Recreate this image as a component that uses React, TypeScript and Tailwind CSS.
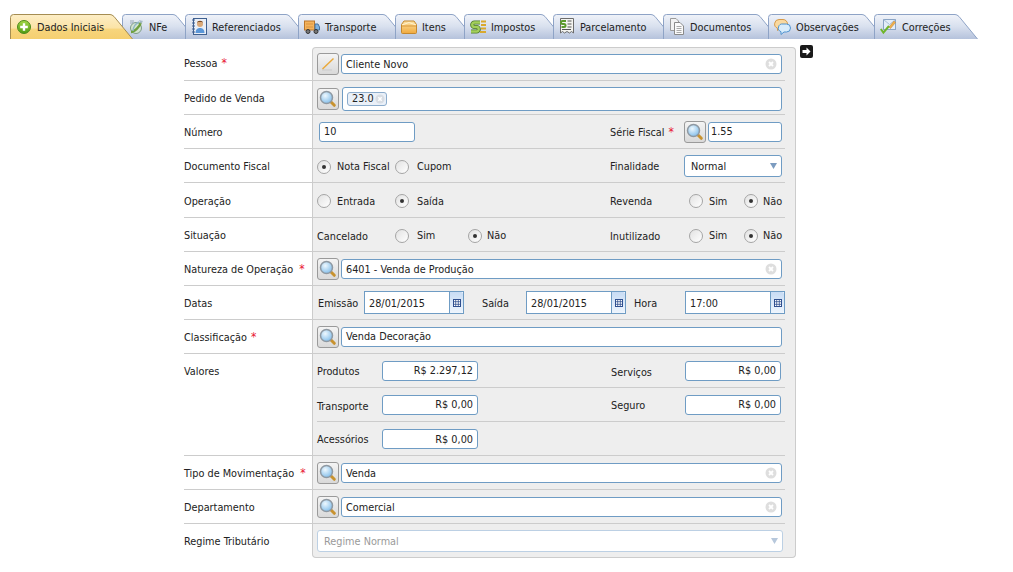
import React from "react";

const Plus = () => (
  <svg width="14" height="14" viewBox="0 0 14 14" className="shrink-0">
    <defs><linearGradient id="pg" x1="0" y1="0" x2="0" y2="1"><stop offset="0" stopColor="#a6d94a" /><stop offset="1" stopColor="#4f9a12" /></linearGradient></defs>
    <circle cx="7" cy="7" r="6.5" fill="url(#pg)" stroke="#4c8a1c" />
    <path d="M7 3.2v7.6M3.2 7h7.6" stroke="#fff" strokeWidth="2.4" />
  </svg>
);
const NfeIcon = () => (
  <svg width="16" height="16" viewBox="0 0 16 16" className="shrink-0">
    <ellipse cx="8" cy="9" rx="5.5" ry="5.5" fill="#d4e4d0" stroke="#7d9c88" />
    <path d="M3 13 C6 13 12 8 13 3" fill="none" stroke="#6fa03e" strokeWidth="2.4" />
    <path d="M5 12 C5 8 8 4 11 3" fill="none" stroke="#8fb6c4" strokeWidth="1.4" />
    <path d="M2 2h2M2 4h3M5 1v3" stroke="#9aa9b8" strokeWidth="1" />
    <path d="M11 1l4 1-2 3z" fill="#a8bccb" />
  </svg>
);
const RefIcon = () => (
  <svg width="16" height="17" viewBox="0 0 16 17" className="shrink-0">
    <rect x="2.5" y="0.5" width="13" height="16" fill="#e9eef6" stroke="#3e5f8f" />
    <path d="M1 2h3M1 5h3M1 8h3M1 11h3M1 14h3" stroke="#3e5f8f" strokeWidth="1.2" />
    <circle cx="9" cy="6" r="3" fill="#d9a878" />
    <path d="M6 5c0-3 6-3 6 0l-1-1H7z" fill="#7a4a24" />
    <path d="M4.500 15c0-4 2.500-5 4.500-5s4.500 1 4.500 5z" fill="#5a96d8" />
  </svg>
);
const Truck = () => (
  <svg width="16" height="14" viewBox="0 0 16 14" className="shrink-0">
    <rect x="0.500" y="1" width="10" height="9" fill="#f4b35c" stroke="#b9762c" />
    <path d="M2 4h7M2 7h7" stroke="#d99440" />
    <path d="M11 4h3l1.500 3v3H11z" fill="#7fb2e0" stroke="#44729f" />
    <circle cx="4" cy="11.500" r="2" fill="#777" stroke="#333" />
    <circle cx="12" cy="11.500" r="2" fill="#777" stroke="#333" />
  </svg>
);
const Box = () => (
  <svg width="16" height="14" viewBox="0 0 16 14" className="shrink-0">
    <defs><linearGradient id="bx" x1="0" y1="0" x2="0" y2="1"><stop offset="0" stopColor="#fde3a4" /><stop offset="1" stopColor="#f0a93c" /></linearGradient></defs>
    <path d="M0.500 4.500 L3 1 H13 L15.500 4.500 V12.500 Q15.500 13.500 14.500 13.500 H1.500 Q0.500 13.500 0.500 12.500Z" fill="url(#bx)" stroke="#c4882e" />
    <path d="M1 5 L8 2.500 L15 5" fill="none" stroke="#fff2cf" />
    <path d="M1 6h14" stroke="#d8973a" />
  </svg>
);
const Tax = () => (
  <svg width="16" height="16" viewBox="0 0 16 16" className="shrink-0">
    <path d="M10 3.500H4.500a2 2 0 000 4.500h2a2 2 0 010 4.500H1" fill="none" stroke="#4e7a2c" strokeWidth="4.200" />
    <path d="M10 3.500H4.500a2 2 0 000 4.500h2a2 2 0 010 4.500H1" fill="none" stroke="#a3cf5a" strokeWidth="2.400" />
    <path d="M11 2.500h5M11 6h5M11 9.500h5M10 13h6" stroke="#d9a92e" strokeWidth="2" />
  </svg>
);
const Receipt = () => (
  <svg width="16" height="17" viewBox="0 0 16 17" className="shrink-0">
    <path d="M1.500 0.500H14.500V15l-2-1.500-2 1.500-2.500-1.500-2.500 1.500-2-1.500-2 1.500z" fill="#f4f4f0" stroke="#6c6c6c" />
    <path d="M7 3H3.500a1.200 1.200 0 000 3h1.500a1.200 1.200 0 010 3H2.500" fill="none" stroke="#5b9a2c" strokeWidth="2" />
    <path d="M8.500 3h4M8.500 6h4M8.500 9h4M3 11.500h9" stroke="#555" strokeWidth="1" />
  </svg>
);
const Docs = () => (
  <svg width="16" height="17" viewBox="0 0 16 17" className="shrink-0">
    <path d="M1.500 0.500H7L9.500 3V12.500H1.500z" fill="#f2f2f2" stroke="#9b9b9b" />
    <path d="M5.500 4.500H11L14.500 8V16.500H5.500z" fill="#fafafa" stroke="#8a8a8a" />
    <path d="M7.500 8.500h5M7.500 10.500h5M7.500 12.500h5M7.500 14.500h5" stroke="#aaa" />
  </svg>
);
const Chat = () => (
  <svg width="17" height="16" viewBox="0 0 17 16" className="shrink-0">
    <path d="M5 0.500h4a4.500 4.500 0 010 9H6l-2.500 2v-2.300A4.500 4.500 0 015 .5z" fill="#f9d9a0" stroke="#d69a4a" />
    <path d="M9 5h3.500a4 4 0 010 8H10l-3 2.500V12.700A4 4 0 019 5z" fill="#d8ecfb" stroke="#4f93cf" />
  </svg>
);
const Fix = () => (
  <svg width="17" height="17" viewBox="0 0 17 17" className="shrink-0">
    <rect x="3.500" y="1.500" width="12" height="10" fill="#e3edf8" stroke="#8aa4c4" />
    <path d="M3.500 1.500l6 5 6-5" fill="none" stroke="#a9bfd8" />
    <path d="M9 9l5-6 1.500 1.500-5 6z" fill="#efb04c" stroke="#c07f28" strokeWidth="0.500" />
    <path d="M0.800 11l2.600 3.600L9 8" fill="none" stroke="#6eb52c" strokeWidth="2" />
  </svg>
);

const tabs = [
  { label: "Dados Iniciais", width: 123, icon: <Plus />, active: true },
  { label: "NFe", width: 74, icon: <NfeIcon /> },
  { label: "Referenciados", width: 124, icon: <RefIcon /> },
  { label: "Transporte", width: 108, icon: <Truck /> },
  { label: "Itens", width: 80, icon: <Box /> },
  { label: "Impostos", width: 100, icon: <Tax /> },
  { label: "Parcelamento", width: 121, icon: <Receipt /> },
  { label: "Documentos", width: 116, icon: <Docs /> },
  { label: "Observações", width: 117, icon: <Chat /> },
  { label: "Correções", width: 104, icon: <Fix /> },
];

function Tab({ label, width, icon, active, index }: { label: string; width: number; icon: React.ReactNode; active?: boolean; index: number }) {
  const id = active ? "tab-on" : `tab-off-${index}`;
  return (
    <div
      className={active ? "relative h-[25px] shrink-0 flex items-center gap-[6px] pl-[7px] -mr-[11px]" : "relative h-[25px] shrink-0 flex items-center gap-[5px] pl-[6px] -mr-[11px]"}
      style={{ width, zIndex: active ? 20 : index }}
    >
      <svg className="absolute left-0 top-0" width={width} height="25" viewBox={`0 0 ${width} 25`}>
        <defs>
          <linearGradient id={id} x1="0" y1="0" x2="0" y2="1">
            {active ? (
              <>
                <stop offset="0" stopColor="#fdeec6" />
                <stop offset="0.55" stopColor="#fbe3a6" />
                <stop offset="0.6" stopColor="#f7d57d" />
                <stop offset="1" stopColor="#f5cf70" />
              </>
            ) : (
              <>
                <stop offset="0" stopColor="#f0f3f9" />
                <stop offset="0.5" stopColor="#d8e0ee" />
                <stop offset="1" stopColor="#b5c2dc" />
              </>
            )}
          </linearGradient>
        </defs>
        <path
          d={`M0.5 25 V3.500 Q0.500 0.500 3.500 0.500 H${width - 23} Q${width - 21} 0.500 ${width - 19} 2.500 L${width - 0.5} 25 Z`}
          fill={`url(#${id})`}
        />
        <path
          d={`M0.5 25 V3.500 Q0.500 0.500 3.500 0.500 H${width - 23} Q${width - 21} 0.500 ${width - 19} 2.500 L${width - 0.5} 25`}
          fill="none"
          stroke={active ? "#a58d52" : "#8ea3c6"}
        />
      </svg>
      <span className="relative flex">{icon}</span>
      <span className="relative whitespace-nowrap leading-none pt-[4px]">{label}</span>
    </div>
  );
}

const Star = ({ className }: { className?: string }) => <span className={`text-[#e8132f] text-[12px] leading-none ${className ?? ""}`}>*</span>;

const Magnifier = () => (
  <svg width="18" height="18" viewBox="0 0 18 18">
    <defs><radialGradient id="lens" cx="0.4" cy="0.35" r="0.7"><stop offset="0" stopColor="#eef8fe" /><stop offset="1" stopColor="#7fbcea" /></radialGradient></defs>
    <path d="M12 12l3.300 3.300" stroke="#c8922e" strokeWidth="3" strokeLinecap="round" />
    <circle cx="7.500" cy="7.500" r="6" fill="url(#lens)" stroke="#8f99a2" strokeWidth="1.500" />
  </svg>
);
const Pencil = () => (
  <svg width="16" height="16" viewBox="0 0 16 16">
    <path d="M2 14H12" stroke="#d0d0d0" strokeWidth="1.500" />
    <path d="M2.500 13L13.500 2.500" stroke="#eaa93a" strokeWidth="1.500" />
  </svg>
);
const IconBtn = ({ children }: { children: React.ReactNode }) => (
  <div className="w-[22px] h-[22px] shrink-0 flex items-center justify-center rounded-[3px] border border-[#9a9a9a] bg-gradient-to-b from-[#f4f4f4] to-[#d9d9d9]">
    {children}
  </div>
);
const Clear = () => (
  <svg width="12" height="12" viewBox="0 0 12 12" className="shrink-0">
    <circle cx="6" cy="6" r="5.500" fill="#dedede" />
    <path d="M4 4l4 4M8 4l-4 4" stroke="#fff" strokeWidth="1.800" />
  </svg>
);
const Arrow = ({ disabled }: { disabled?: boolean }) => (
  <svg width="7" height="6" viewBox="0 0 7 6" className="shrink-0">
    <path d="M0 0h7L3.500 6z" fill={disabled ? "#b7c8dc" : "#7c9cc0"} />
  </svg>
);
const CalBtn = () => (
  <div className="w-[14px] self-stretch shrink-0 flex items-center justify-center border-l border-[#6f9cc4] bg-gradient-to-b from-[#c8dcf4] to-[#eef5fd] rounded-r-[2px]">
    <svg width="8" height="8" viewBox="0 0 8 8">
      <rect x="0.500" y="0.500" width="7" height="7" fill="#fff" stroke="#2f4f8f" />
      <path d="M0 2.700h8M0 5.300h8M2.700 0v8M5.300 0v8" stroke="#2f4f8f" strokeWidth="0.800" />
    </svg>
  </div>
);

const inputCls = "flex items-center bg-white border border-[#6f9cc4] rounded-[3px]";

const Radio = ({ on, label, className }: { on?: boolean; label: string; className: string }) => (
  <div className={`flex items-center shrink-0 pt-[2px] ${className}`}>
    <span className="w-[14px] h-[14px] rounded-full border border-[#a5a5a5] bg-gradient-to-br from-[#e2e2e2] to-[#ffffff] flex items-center justify-center shrink-0">
      {on && <span className="w-[4px] h-[4px] rounded-full bg-[#333]" />}
    </span>
    <span className="whitespace-nowrap pt-[2px]">{label}</span>
  </div>
);

function Row({ label, children, h = "h-[34px]", first, last, top }: { label: React.ReactNode; children: React.ReactNode; h?: string; first?: boolean; last?: boolean; top?: boolean }) {
  return (
    <div className={`flex ${h}`}>
      <div className={`w-[128px] shrink-0 flex whitespace-nowrap ${top ? "items-start pt-[10px]" : first || last ? "items-center pt-[2px]" : "items-center pt-[4px]"} ${last ? "" : "border-b border-[#cccccc]"}`}>{label}</div>
      <div className={`w-[484px] shrink-0 bg-[#eeeeee] border-x border-[#cccccc] pr-[10px] ${first ? "border-t rounded-t-[4px]" : ""} ${last ? "border-b rounded-b-[4px]" : ""}`}>
        <div className={`h-full flex items-center pl-[4px] ${last ? "" : "border-b border-[#cccccc]"} ${top ? "flex-col items-stretch !pl-0" : ""}`}>{children}</div>
      </div>
    </div>
  );
}

const Lookup = ({ value, icon = <Magnifier />, clear = true, small }: { value: string; icon?: React.ReactNode; clear?: boolean; small?: boolean }) => (
  <div className="flex items-center gap-[2px] w-[465px]">
    <IconBtn>{icon}</IconBtn>
    <div className={`${inputCls} h-[20px] flex-1 pl-[4px] pr-[4px] justify-between`}>
      <span className={small ? "pt-[2px]" : "pt-[4px]"}>{value}</span>
      {clear && <Clear />}
    </div>
  </div>
);

const DateField = ({ value }: { value: string }) => (
  <div className="flex items-stretch h-[23px] w-[100px] bg-white border border-[#6f9cc4] shrink-0">
    <span className="flex-1 pl-[4px] pt-[4px] flex items-center">{value}</span>
    <CalBtn />
  </div>
);
const Money = ({ value, low }: { value: string; low?: boolean }) => (
  <div className={`${inputCls} w-[96px] h-[20px] justify-end pr-[4px] shrink-0`}>
    <span className={low ? "pt-[4px]" : "pt-[2px]"}>{value}</span>
  </div>
);
const SubRow = ({ children, line, h }: { children: React.ReactNode; line?: boolean; h: string }) => (
  <div className={`${h} ml-[4px] flex items-center ${line ? "border-b border-[#cccccc]" : ""}`}>{children}</div>
);

export default function App() {
  return (
    <div className="min-h-[572px] w-[1013px] bg-white text-[#222222] text-[10.8px] font-['DejaVu_Sans',sans-serif] [font-stretch:condensed] overflow-hidden pt-[14px]">
      <div className="flex pl-[10px] h-[25px]">
        {tabs.map((t, i) => (
          <Tab key={t.label} {...t} index={i + 1} />
        ))}
      </div>
      <div className="flex items-start pl-[184px] pt-[8px]">
        <div className="flex flex-col w-[612px]">
          <Row first label={<span>Pessoa <Star className="ml-[1px]" /></span>}>
            <Lookup value="Cliente Novo" icon={<Pencil />} small />
          </Row>
          <Row label="Pedido de Venda">
            <div className="flex items-center gap-[3px] w-[465px] pt-[2px]">
              <IconBtn><Magnifier /></IconBtn>
              <div className={`${inputCls} h-[24px] flex-1 pl-[4px]`}>
                <div className="h-[14px] w-[40px] flex items-center justify-between rounded-[3px] border border-[#8caccc] bg-[#eaf0f8] pl-[4px] pr-[1px]">
                  <span className="pt-[2px]">23.0</span>
                  <svg width="10" height="10" viewBox="0 0 12 12"><circle cx="6" cy="6" r="5.500" fill="#d8dde4" /><path d="M4 4l4 4M8 4l-4 4" stroke="#fff" strokeWidth="1.800" /></svg>
                </div>
              </div>
            </div>
          </Row>
          <Row label="Número">
            <div className="flex items-center w-[465px] pl-[2px]">
              <div className={`${inputCls} w-[96px] h-[20px] pl-[4px]`}><span className="pt-[2px]">10</span></div>
              <div className="ml-[195px] w-[74px] whitespace-nowrap pt-[4px]">Série Fiscal <Star className="ml-[1px]" /></div>
              <IconBtn><Magnifier /></IconBtn>
              <div className={`${inputCls} ml-[2px] w-[74px] h-[20px] pl-[2px]`}><span className="pt-[2px]">1.55</span></div>
            </div>
          </Row>
          <Row label="Documento Fiscal">
            <Radio on label="Nota Fiscal" className="w-[78px] gap-[6px]" />
            <Radio label="Cupom" className="w-[215px] gap-[8px]" />
            <div className="w-[74px] pt-[4px]">Finalidade</div>
            <div className={`${inputCls} w-[98px] h-[22px] pl-[6px] pr-[4px] justify-between`}>
              <span className="pt-[4px]">Normal</span>
              <Arrow />
            </div>
          </Row>
          <Row h="h-[35px]" label="Operação">
            <Radio label="Entrada" className="w-[78px] gap-[6px]" />
            <Radio on label="Saída" className="w-[215px] gap-[8px]" />
            <div className="w-[79px] pt-[4px]">Revenda</div>
            <Radio label="Sim" className="w-[55px] gap-[6px]" />
            <Radio on label="Não" className="gap-[5px]" />
          </Row>
          <Row label="Situação">
            <div className="w-[78px] pt-[6px]">Cancelado</div>
            <Radio label="Sim" className="w-[73px] gap-[8px]" />
            <Radio on label="Não" className="w-[142px] gap-[5px]" />
            <div className="w-[79px] pt-[6px]">Inutilizado</div>
            <Radio label="Sim" className="w-[55px] gap-[6px]" />
            <Radio on label="Não" className="gap-[5px]" />
          </Row>
          <Row label={<span>Natureza de Operação <Star className="ml-[3px]" /></span>}>
            <Lookup value="6401 - Venda de Produção" />
          </Row>
          <Row label="Datas">
            <div className="w-[47px] pl-[1px] pt-[4px]">Emissão</div>
            <DateField value="28/01/2015" />
            <div className="w-[44px] ml-[18px] pt-[4px]">Saída</div>
            <DateField value="28/01/2015" />
            <div className="w-[51px] ml-[8px] pt-[4px]">Hora</div>
            <DateField value="17:00" />
          </Row>
          <Row label={<span>Classificação <Star className="ml-[1px]" /></span>}>
            <Lookup value="Venda Decoração" clear={false} small />
          </Row>
          <Row top h="h-[102px]" label="Valores">
            <SubRow line h="h-[34px]">
              <div className="w-[65px] pt-[4px]">Produtos</div>
              <Money value="R$ 2.297,12" />
              <div className="w-[207px] pl-[133px] pt-[6px]">Serviços</div>
              <Money value="R$ 0,00" />
            </SubRow>
            <SubRow line h="h-[34px]">
              <div className="w-[65px] pt-[6px]">Transporte</div>
              <Money value="R$ 0,00" />
              <div className="w-[207px] pl-[133px] pt-[4px]">Seguro</div>
              <Money value="R$ 0,00" />
            </SubRow>
            <SubRow h="h-[33px]">
              <div className="w-[65px] pt-[4px]">Acessórios</div>
              <Money value="R$ 0,00" low />
            </SubRow>
          </Row>
          <Row label={<span>Tipo de Movimentação <Star className="ml-[3px]" /></span>}>
            <Lookup value="Venda" />
          </Row>
          <Row label="Departamento">
            <Lookup value="Comercial" />
          </Row>
          <Row last label="Regime Tributário">
            <div className="w-[466px] h-[22px] flex items-center justify-between pl-[6px] pr-[4px] bg-white border border-[#bcd0e4] rounded-[3px] text-[#9a9a9a]">
              <span className="pt-[4px]">Regime Normal</span>
              <Arrow disabled />
            </div>
          </Row>
        </div>
        <div className="ml-[4px] -mt-[2px] w-[13px] h-[13px] rounded-[2px] bg-[#1a1a1a] flex items-center justify-center">
          <svg width="9" height="9" viewBox="0 0 9 9"><path d="M0.500 3H4.500V0.500L8.500 4.500 4.500 8.500V6H0.500z" fill="#fff" /></svg>
        </div>
      </div>
    </div>
  );
}
